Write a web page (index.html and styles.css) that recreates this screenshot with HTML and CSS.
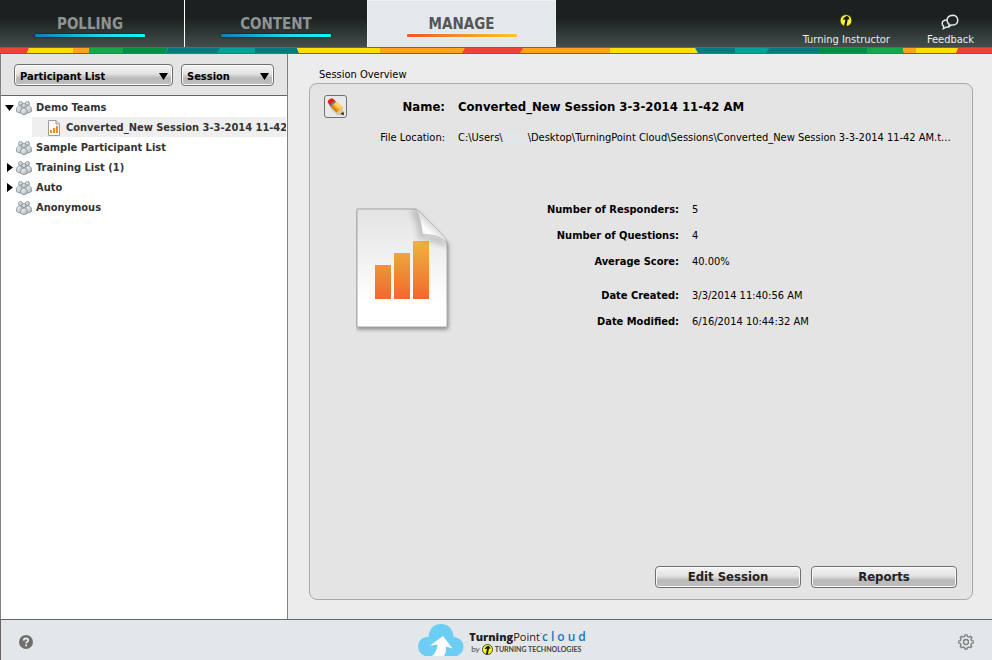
FILE: index.html
```html
<!DOCTYPE html>
<html lang="en">
<head>
<meta charset="utf-8">
<title>TurningPoint Cloud - Manage</title>
<link rel="stylesheet" href="styles.css">
</head>
<body>
<svg class="defs" width="0" height="0" aria-hidden="true">
  <defs>
    <linearGradient id="pawn" x1="0" y1="0" x2="1" y2="1"><stop offset="0" stop-color="#ffffff"/><stop offset="1" stop-color="#a3adb5"/></linearGradient>
    <linearGradient id="bars" gradientUnits="userSpaceOnUse" x1="0" y1="33" x2="0" y2="91"><stop offset="0" stop-color="#ebb63f"/><stop offset="1" stop-color="#f2672f"/></linearGradient>
    <symbol id="group" viewBox="0 0 16 16">
      <g fill="url(#pawn)" stroke="#7e8a93" stroke-width="0.8">
        <circle cx="4.500" cy="3.500" r="2"/><circle cx="11.500" cy="3.500" r="2"/>
        <path d="M.6 11.500Q0 6 4 5.600Q6 6 6 8L5.500 12.500Q2 13.500.6 11.500Z"/>
        <path d="M15.400 11.500Q16 6 12 5.600Q10 6 10 8L10.500 12.500Q14 13.500 15.400 11.500Z"/>
        <circle cx="8" cy="5.600" r="2.200"/>
        <path d="M4.800 13.500Q4 8.600 8 8Q12 8.600 11.200 13.500Q8 15.800 4.800 13.500Z"/>
      </g>
    </symbol>
    <symbol id="turn" viewBox="0 0 14 14">
      <circle cx="7" cy="7" r="6.400" fill="#f9f535" stroke="#26260f" stroke-width="1"/>
      <path d="M3.300 6.300Q4.600 3.200 7.600 2.200Q10.400 2.600 10.700 6L8.900 5.700L7.500 13H4.900L6.400 5.900Z" fill="#17170d"/>
    </symbol>
  </defs>
</svg>
<header class="top">
  <nav class="tabs">
    <a class="tab tab-polling" href="#polling"><span>POLLING</span></a>
    <a class="tab tab-content" href="#content"><span>CONTENT</span></a>
    <a class="tab tab-manage active" href="#manage" aria-current="page"><span>MANAGE</span></a>
  </nav>
  <div class="account">
    <a href="#instructor"><svg class="i-turn" width="14" height="14"><use href="#turn"/></svg>Turning Instructor</a>
    <a href="#feedback">
      <svg width="18" height="16" viewBox="0 0 18 16" fill="none" stroke="#e4e8e8" stroke-width="1.500"><path d="M8 10.200L7.800 12L10.200 11Q16.600 11.400 16.800 6.200Q16.400 1.200 11.400 1.200Q6.400 1.600 6 6.200Q6.200 8.800 8 10.200Z"/><path d="M5.800 6Q1.200 6.200 1.200 9.400Q1.200 11.200 2.600 12.200L2.400 14.600L5 13.200Q8 13.600 9.400 11.600"/></svg>Feedback</a>
  </div>
</header>
<svg class="stripe" viewBox="0 0 992 5" preserveAspectRatio="none" aria-hidden="true">
  <path fill="#f04336" d="M0 0H29L27 5H0z"/>
  <path fill="#ffde00" d="M29 0H74V5H27z"/>
  <path fill="#f9a61a" d="M73 0H89V5H73z"/>
  <path fill="#14a84a" d="M89 0H123V5H89z"/>
  <path fill="#008f45" d="M123 0H168L165 5H123z"/>
  <path fill="#067a80" d="M168 0H297L299 5H165z"/>
  <path fill="#00a398" d="M220 0H255V5H217z"/>
  <path fill="#ffde00" d="M297 0H380V5H299z"/>
  <path fill="#f9a61a" d="M380 0H610V5H380z"/>
  <path fill="#f04336" d="M465 0H523L520 5H462z"/>
  <path fill="#ffde00" d="M610 0H695L698 5H610z"/>
  <path fill="#067a80" d="M695 0H819V5H698z"/>
  <path fill="#00a398" d="M735 0H769L766 5H735z"/>
  <path fill="#008f45" d="M819 0H867V5H819z"/>
  <path fill="#14a84a" d="M867 0H903L904 5H867z"/>
  <path fill="#f9a61a" d="M903 0H916V5H904z"/>
  <path fill="#ffde00" d="M916 0H958L956 5H916z"/>
  <path fill="#f04336" d="M958 0H992V5H956z"/>
</svg>
<div class="work">
  <aside class="side">
    <div class="filters">
      <div class="pick pick-list"><select aria-label="List type"><option>Participant List</option></select><svg width="9" height="7"><path d="M0 0H9L4.500 7z"/></svg></div>
      <div class="pick pick-kind"><select aria-label="Item type"><option>Session</option></select><svg width="9" height="7"><path d="M0 0H9L4.500 7z"/></svg></div>
    </div>
    <ul class="tree">
      <li>
        <div class="node"><svg class="twist" width="9" height="9"><path d="M0 2H9L4.500 8z"/></svg><svg width="16" height="16"><use href="#group"/></svg>Demo Teams</div>
        <ul>
          <li class="node leaf"><svg width="12" height="16" viewBox="0 0 12 16"><path d="M.5.500H8L11.500 4V15.500H.5z" fill="#fbfbfb" stroke="#9d9d9d"/><path d="M8 .5V4H11.500" fill="#ddd" stroke="#9d9d9d"/><path fill="#f28a2e" d="M2 10H4V13H2zM5 8H7V13H5zM8 6H10V13H8z"/></svg><span>Converted_New Session 3-3-2014 11-42 AM</span></li>
        </ul>
      </li>
      <li class="node"><span class="twist"></span><svg width="16" height="16"><use href="#group"/></svg>Sample Participant List</li>
      <li class="node"><svg class="twist" width="9" height="9"><path d="M2 0V9L8 4.500z"/></svg><svg width="16" height="16"><use href="#group"/></svg>Training List (1)</li>
      <li class="node"><svg class="twist" width="9" height="9"><path d="M2 0V9L8 4.500z"/></svg><svg width="16" height="16"><use href="#group"/></svg>Auto</li>
      <li class="node"><span class="twist"></span><svg width="16" height="16"><use href="#group"/></svg>Anonymous</li>
    </ul>
  </aside>
  <main class="content">
    <h1>Session Overview</h1>
    <section class="panel">
      <div class="head">
        <button class="edit" aria-label="Edit name"><svg width="18" height="18" viewBox="0 0 18 18"><path d="M3 10L10 17L17 17.500L14 8z" fill="#b9b9b9" opacity=".6"/><path d="M3.500 8.500L8.500 3.500L15.500 9L16.800 17L9.500 14.500z" fill="#f5a51c"/><path d="M6.500 6L8.800 3.800L15.500 9L13 11.500z" fill="#ffd45a"/><path d="M3.500 8.500L5 7.200L11 13L9.500 14.500z" fill="#d97b10"/><path d="M9.500 14.500L15.500 9L16.800 17z" fill="#dcc49a"/><path d="M13.600 16L16.300 13.800L17 17.200z" fill="#222"/><path d="M2.200 7L7.500 2L9.200 3.800L3.800 9z" fill="#76808c"/><path d="M.8 4.500Q.8.600 5.500.3L8 2.500L2.700 7.300z" fill="#e3201b"/></svg></button>
        <dl class="title">
          <dt>Name:</dt><dd>Converted_New Session 3-3-2014 11-42 AM</dd>
        </dl>
        <dl class="path">
          <dt>File Location:</dt><dd>C:\Users\<span class="blank"></span>\Desktop\TurningPoint Cloud\Sessions\Converted_New Session 3-3-2014 11-42 AM.t...</dd>
        </dl>
      </div>
      <div class="details">
        <svg class="doc" width="100" height="128" viewBox="0 0 100 128" aria-hidden="true">
          <defs>
            <linearGradient id="page" x1="0" y1="0" x2="0" y2="1"><stop offset="0" stop-color="#e3e3e3"/><stop offset=".8" stop-color="#fff"/></linearGradient>
            <linearGradient id="curl" gradientUnits="userSpaceOnUse" x1="66" y1="27" x2="77" y2="15"><stop offset="0" stop-color="#e8e8e8"/><stop offset=".4" stop-color="#fff"/><stop offset="1" stop-color="#d4d4d4"/></linearGradient>
            <filter id="soft" x="-20%" y="-20%" width="150%" height="150%"><feGaussianBlur stdDeviation="2"/></filter>
            <filter id="soft2" x="-50%" y="-50%" width="200%" height="200%"><feGaussianBlur stdDeviation="3"/></filter>
            <clipPath id="sheet"><path d="M1 1H60L91 34V119H1z"/></clipPath>
          </defs>
          <path d="M1 3H60L92 36V121H1z" fill="#555" opacity=".75" filter="url(#soft)"/>
          <path d="M1 1H60L91 34V119H1z" fill="url(#page)" stroke="#aaa" stroke-width="1"/>
          <path fill="url(#bars)" d="M19 57H35V91H19zM38 45H54V91H38zM57 33H73V91H57z"/>
          <g clip-path="url(#sheet)"><path d="M58 1Q66 10 66 29Q82 28 92 37L90 37Q78 31 64 30Q64 12 56 2z" fill="#333" opacity=".65" filter="url(#soft2)"/></g>
          <path d="M59 1Q65 8 66 27Q82 25 91 35Q90 30 84 24L67 7Q62 2 59 1Z" fill="url(#curl)" stroke="#aaa" stroke-width=".6"/>
        </svg>
        <dl class="stats">
          <dt>Number of Responders:</dt><dd>5</dd>
          <dt>Number of Questions:</dt><dd>4</dd>
          <dt>Average Score:</dt><dd>40.00%</dd>
          <dt class="dates">Date Created:</dt><dd class="dates">3/3/2014 11:40:56 AM</dd>
          <dt>Date Modified:</dt><dd>6/16/2014 10:44:32 AM</dd>
        </dl>
      </div>
      <div class="actions"><button>Edit Session</button><button>Reports</button></div>
    </section>
  </main>
</div>
<footer class="foot">
  <button class="plain" aria-label="Help"><svg width="14" height="14" viewBox="0 0 14 14"><circle cx="7" cy="7" r="7" fill="#6f6f6f"/><path d="M4.800 5.400Q4.800 3.400 7 3.400Q9.300 3.500 9.200 5.300Q9.100 6.300 7.900 6.900Q7.100 7.300 7.100 8.600" fill="none" stroke="#f2f2f2" stroke-width="1.700"/><path d="M6.200 9.600H8V11.200H6.200z" fill="#f2f2f2"/></svg></button>
  <div class="brand">
    <svg width="46" height="32" viewBox="0 0 46 32" aria-hidden="true"><path d="M7 32Q0 29 0 22Q.5 13.500 10.500 12.800Q12 0 23 0Q34.500.5 35.500 13Q45 14 45.500 22.500Q45.500 29 39 32z" fill="#6ccdf5"/><path d="M14 32Q19 28 19.500 20.500L11.800 21.800L25 12L34.500 24.500L27.800 22.500Q28.500 28 26 32z" fill="#fff"/></svg>
    <div class="words">
      <p class="product"><b>Turning</b>Point<sup>·</sup><span>cloud</span></p>
      <p class="maker">by <svg width="11" height="11"><use href="#turn"/></svg> <span>TURNING TECHNOLOGIES</span></p>
    </div>
  </div>
  <button class="plain" aria-label="Settings"><svg width="16" height="16" viewBox="0 0 16 16" fill="none" stroke="#7b7d7f" stroke-width="1.300"><circle cx="8" cy="8" r="2.500"/><path d="M6.500 2.500L7 .8H9L9.500 2.500L11 3.100L12.600 2.200L13.900 3.500L12.900 5L13.500 6.500L15.200 7V9L13.500 9.500L12.900 11L13.800 12.600L12.500 13.800L11 12.900L9.500 13.500L9 15.200H7L6.500 13.500L5 12.900L3.400 13.800L2.200 12.500L3.100 11L2.500 9.500L.8 9V7L2.500 6.500L3.100 5L2.200 3.400L3.500 2.200L5 3.100z"/></svg></button>
</footer>
</body>
</html>
```
FILE: styles.css
```css
* { box-sizing: border-box; }
body {
  margin: 0;
  min-height: 100vh;
  display: flex;
  flex-direction: column;
  background: #ececec;
  color: #000;
  font: 11px/20px "DejaVu Sans Condensed", "Noto Sans", sans-serif;
}
ul, dl, dd, p, h1 { margin: 0; padding: 0; }
ul { list-style: none; }
a { color: inherit; text-decoration: none; }
button, select { font: inherit; color: inherit; }
.defs { position: absolute; }

.top {
  height: 47px;
  display: flex;
  justify-content: space-between;
  background: linear-gradient(#1b2120 0, #1b2120 38%, #434e4b 100%);
}
.tabs { display: flex; }
.tab {
  display: flex;
  justify-content: center;
  color: #8f9391;
  font-size: 15px;
  font-weight: bold;
}
.tab span {
  width: 110px;
  padding-top: 14px;
  text-align: center;
}
.tab span::after {
  content: "";
  display: block;
  height: 3px;
  border-radius: 1px;
  background: linear-gradient(90deg, #0a80b8, #25d5e5 60%, #00fff8);
  box-shadow: 0 0 2px #000;
}
.tab-polling { width: 185px; padding-right: 4px; border-right: 1px solid #fff; }
.tab-content { width: 182px; }
.tab-manage { width: 189px; }
.tab.active { background: #e3e8eb; color: #555; border: 1px solid #edf1f3; border-bottom: 0; }
.tab.active span { padding-top: 13px; }
.tab.active span::after {
  background: linear-gradient(90deg, #ee5a22, #ffc42e);
  box-shadow: 0 0 2px #fff;
}
.account {
  display: flex;
  gap: 37px;
  padding: 14px 18px 0 0;
  color: #eceeee;
  line-height: 16px;
}
.account a { display: flex; flex-direction: column; align-items: center; justify-content: flex-end; gap: 2px; height: 34px; }
.account .i-turn { margin-bottom: 3px; }

.stripe {
  width: 100%;
  height: 7px;
  border: solid #6a6464;
  border-width: 1px 0;
}

.work { flex: 1; display: flex; }
.side {
  width: 288px;
  flex: none;
  background: #fff;
  border: solid #808088;
  border-width: 0 1px;
}
.filters {
  display: flex;
  gap: 8px;
  height: 42px;
  padding: 10px 13px;
  background: #e4e4e4;
  border-bottom: 1px solid #6a6464;
}
.pick { position: relative; }
.pick-list { width: 159px; }
.pick-kind { width: 93px; }
.pick svg { position: absolute; right: 5px; top: 9px; pointer-events: none; }
.pick select {
  appearance: none;
  width: 100%;
  height: 22px;
  padding: 2px 5px 0;
  font-weight: bold;
}
.pick select, .actions button {
  border: 1px solid #6e7072;
  border-radius: 4px;
  background: linear-gradient(#f5f5f5 0, #e2e2e2 45%, #bababa 65%, #bdbdbd 100%);
  box-shadow: inset 0 0 0 1px #fafafa;
}
.tree { padding: 1px 1px 0 4px; color: #333; font-weight: bold; }
.node { display: flex; align-items: center; gap: 4px; height: 20px; padding-top: 1px; white-space: nowrap; }
.node svg { flex: none; }
.twist { width: 9px; flex: none; }
.node .twist + svg { margin-left: -2px; }
.leaf { margin-left: 27px; padding-left: 16px; gap: 6px; background: #efefef; overflow: hidden; }

.content {
  flex: 1;
  min-width: 0;
  display: flex;
  flex-direction: column;
  padding: 13px 19px 19px 21px;
}
h1 { padding-left: 10px; font-size: 11px; font-weight: normal; line-height: 16px; }
.panel {
  flex: 1;
  display: flex;
  flex-direction: column;
  padding: 11px 15px 11px 14px;
  background: #e4e4e4;
  border: 1px solid #aaa;
  border-radius: 8px;
}
.head {
  display: grid;
  grid-template-columns: 23px 1fr;
  row-gap: 7px;
}
.edit {
  width: 23px;
  height: 23px;
  padding: 2px;
  border: 1px solid #707274;
  border-radius: 3px;
  background: #e9e9e9;
}
.edit svg, .plain svg { display: block; }
.head dl { display: grid; grid-template-columns: 98px 1fr; column-gap: 13px; line-height: 24px; white-space: nowrap; }
.head dt { text-align: right; }
.path { grid-column: 2; }
.title { font-size: 13px; font-weight: bold; }
.blank { display: inline-block; width: 25px; height: 12px; border-radius: 6px; background: #e3e6e9; vertical-align: middle; }
.details { display: flex; padding: 58px 0 0 32px; }
.doc { flex: none; }
.stats {
  display: grid;
  grid-template-columns: 223px auto;
  grid-auto-rows: min-content;
  column-gap: 13px;
  row-gap: 6px;
  margin-top: -8px;
}
.stats dt { text-align: right; font-weight: bold; }
.stats .dates { padding-top: 8px; }
.actions { display: flex; justify-content: flex-end; gap: 10px; margin-top: auto; }
.actions button { width: 146px; height: 22px; padding: 0; font-size: 13px; font-weight: bold; color: #222; }

.foot {
  height: 41px;
  display: flex;
  align-items: center;
  justify-content: space-between;
  padding: 0 18px;
  background: #e3e7ea;
  border: solid #6a6464;
  border-width: 1px 0 0 1px;
}
.plain { padding: 4px 0 0; border: 0; background: none; }
.brand { display: flex; gap: 5px; padding-left: 16px; }
.words { color: #222; }
.product { padding-top: 5px; font: 11px/15px "Open Sans", sans-serif; }
.product b { font-weight: 800; }
.product sup { font-size: 8px; line-height: 8px; }
.product span { color: #1779ba; font-size: 12px; font-weight: 600; letter-spacing: 3px; }
.maker { display: flex; align-items: center; gap: 2px; padding-left: 2px; color: #444; font: 8px/11px "Lato", sans-serif; }
.maker span { font-size: 7px; font-weight: bold; }
```
